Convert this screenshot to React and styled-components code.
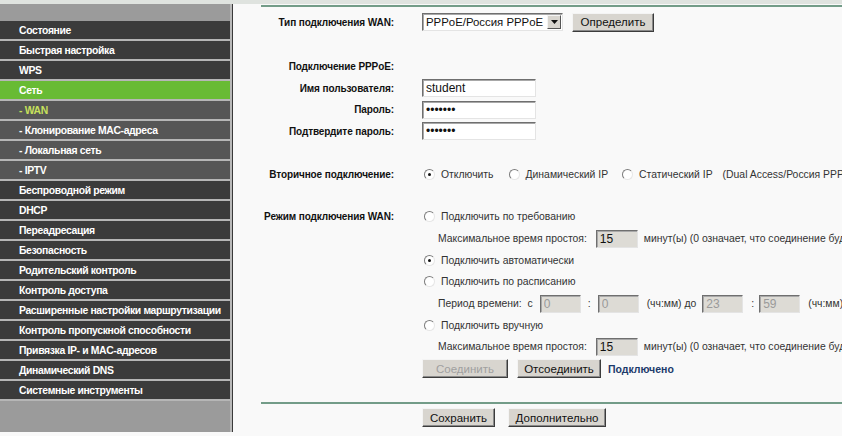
import React from 'react';
import styled, { createGlobalStyle } from 'styled-components';

const GlobalStyle = createGlobalStyle`
   html, body {
      margin: 0;
      padding: 0;
      background: #f9f9f9;
      width: 842px;
      height: 436px;
      overflow: hidden;
   }
   body {
      font-family: "Liberation Sans", Arial, sans-serif;
      font-size: 10.4px;
      color: #222;
   }
`;

const Page = styled.div`
   display: flex;
   flex-direction: column;
   width: 842px;
   height: 436px;
`;

const TopStrip = styled.div`
   height: 4px;
   background: #dfe3df;
   flex-shrink: 0;
`;

const Body = styled.div`
   display: flex;
   flex: 1;
   min-height: 0;
`;

const Sidebar = styled.nav`
   width: 232px;
   height: 428px;
   background: #9b9b9b;
   padding-top: 17px;
   box-sizing: border-box;
   border-right: 2px solid #b9b9b9;
   box-shadow: 1px 0 0 #3a3a3a;
   flex-shrink: 0;
`;

const MenuItem = styled.div`
   height: 18px;
   border-bottom: 2px solid #b6b6b6;
   padding-left: 19px;
   display: flex;
   align-items: center;
   font-family: "Liberation Sans", Arial, sans-serif;
   font-weight: bold;
   font-size: 10.4px;
   letter-spacing: -0.35px;
   white-space: nowrap;
   overflow: hidden;
   color: ${({ $kind }) => ($kind === 'subActive' ? '#c6e05c' : '#fff')};
   background: ${({ $kind }) =>
      $kind === 'active' ? '#68bb34' : $kind === 'sub' || $kind === 'subActive' ? '#565656' : '#3b3b3b'};
`;

const Content = styled.main`
   flex: 1;
   padding-left: 29px;
   padding-top: 1px;
   white-space: nowrap;
   overflow: hidden;
`;

const Line = styled.div`
   height: 2px;
   background: #739c88;
   margin-top: ${({ $mt }) => $mt || 0}px;
`;

const Row = styled.div`
   display: flex;
   align-items: center;
   height: ${({ $h }) => $h || 22}px;
   margin-top: ${({ $mt }) => $mt || 0}px;
`;

const Label = styled.div`
   width: 133px;
   margin-right: 28px;
   text-align: right;
   font-weight: bold;
   font-size: 10px;
   letter-spacing: -0.1px;
   color: #111;
   flex-shrink: 0;
`;

const Field = styled.div`
   display: flex;
   align-items: center;
   padding-left: ${({ $indent }) => $indent || 0}px;
`;

const Text = styled.span`
   color: #333;
   margin-left: ${({ $ml }) => $ml || 0}px;
   margin-right: ${({ $mr }) => $mr || 0}px;
`;

const Status = styled.span`
   font-weight: bold;
   font-size: 10.5px;
   color: #1c3a6b;
   margin-left: 7px;
`;

const TextInput = styled.input`
   box-sizing: border-box;
   width: ${({ $w }) => $w || 114}px;
   height: 18px;
   padding: 0 3px;
   margin: 0 ${({ $mr }) => $mr || 0}px 0 ${({ $ml }) => $ml || 0}px;
   font-family: "Liberation Sans", Arial, sans-serif;
   font-size: 12px;
   color: ${({ $muted }) => ($muted ? '#9a9a9a' : '#111')};
   background: ${({ $grey }) => ($grey ? '#dddbd5' : '#fff')};
   border: 1px solid;
   border-color: #6f6f6f #e4e4e4 #e4e4e4 #6f6f6f;
   box-shadow: inset 1px 1px 0 #a8a8a8;
   outline: none;
`;

const Button = styled.button`
   box-sizing: border-box;
   height: 19px;
   width: ${({ $w }) => $w}px;
   padding: 0;
   margin-left: ${({ $ml }) => $ml || 0}px;
   font-family: "Liberation Sans", Arial, sans-serif;
   font-size: 11.5px;
   color: ${({ disabled }) => (disabled ? '#a0a0a0' : '#111')};
   background: #d8d5cf;
   border: 1px solid;
   border-color: #f4f4f4 #3c3c3c #3c3c3c #f4f4f4;
   box-shadow: inset -1px -1px 0 #8a8a8a;
`;

const SelectBox = styled.div`
   box-sizing: border-box;
   width: 141px;
   height: 18px;
   display: flex;
   align-items: center;
   justify-content: space-between;
   background: #fff;
   border: 1px solid;
   border-color: #6f6f6f #e4e4e4 #e4e4e4 #6f6f6f;
   box-shadow: inset 1px 1px 0 #a8a8a8;
   padding-left: 3px;
   font-size: 11.4px;
   color: #111;
`;

const SelectArrow = styled.span`
   width: 14px;
   height: 14px;
   margin-right: 1px;
   display: flex;
   align-items: center;
   justify-content: center;
   background: #d8d5cf;
   border: 1px solid;
   border-color: #f4f4f4 #555 #555 #f4f4f4;
   box-sizing: border-box;
`;

const RadioWrap = styled.span`
   display: inline-flex;
   align-items: center;
   margin-left: ${({ $ml }) => $ml || 0}px;
   color: #333;
`;

const RadioCircle = styled.span`
   box-sizing: border-box;
   width: 11px;
   height: 11px;
   border-radius: 50%;
   border: 1px solid;
   border-color: #7c7c7c #e6e6e6 #e6e6e6 #7c7c7c;
   background: #fff;
   margin: 0 6px 0 2px;
   display: inline-flex;
   align-items: center;
   justify-content: center;
   flex-shrink: 0;

   &::after {
      content: '';
      width: 3px;
      height: 3px;
      border-radius: 50%;
      background: ${({ $checked }) => ($checked ? '#111' : 'transparent')};
   }
`;

const Radio = ({ checked, label, ml }) => (
   <RadioWrap $ml={ml}>
      <RadioCircle $checked={checked} />
      {label}
   </RadioWrap>
);

const menu = [
   ['Состояние', 'main'],
   ['Быстрая настройка', 'main'],
   ['WPS', 'main'],
   ['Сеть', 'active'],
   ['- WAN', 'subActive'],
   ['- Клонирование MAC-адреса', 'sub'],
   ['- Локальная сеть', 'sub'],
   ['- IPTV', 'sub'],
   ['Беспроводной режим', 'main'],
   ['DHCP', 'main'],
   ['Переадресация', 'main'],
   ['Безопасность', 'main'],
   ['Родительский контроль', 'main'],
   ['Контроль доступа', 'main'],
   ['Расширенные настройки маршрутизации', 'main'],
   ['Контроль пропускной способности', 'main'],
   ['Привязка IP- и MAC-адресов', 'main'],
   ['Динамический DNS', 'main'],
   ['Системные инструменты', 'main'],
];

const idleNote = 'минут(ы) (0 означает, что соединение будет активно всегда)';
const hidden = '•••••••';

const App = () => (
   <Page>
      <GlobalStyle />
      <TopStrip />
      <Body>
         <Sidebar>
            {menu.map(([title, kind]) => (
               <MenuItem key={title} $kind={kind}>{title}</MenuItem>
            ))}
         </Sidebar>
         <Content>
            <Line />
            <Row $mt={4}>
               <Label>Тип подключения WAN:</Label>
               <Field>
                  <SelectBox>
                     PPPoE/Россия PPPoE
                     <SelectArrow>
                        <svg width="7" height="4" viewBox="0 0 7 4"><path d="M0 0h7L3.5 4z" fill="#111" /></svg>
                     </SelectArrow>
                  </SelectBox>
                  <Button $w={82} $ml={9}>Определить</Button>
               </Field>
            </Row>

            <Row $mt={22}>
               <Label>Подключение PPPoE:</Label>
            </Row>
            <Row>
               <Label>Имя пользователя:</Label>
               <Field><TextInput readOnly value="student" /></Field>
            </Row>
            <Row $h={21}>
               <Label>Пароль:</Label>
               <Field><TextInput readOnly value={hidden} /></Field>
            </Row>
            <Row>
               <Label>Подтвердите пароль:</Label>
               <Field><TextInput readOnly value={hidden} /></Field>
            </Row>

            <Row $mt={21}>
               <Label>Вторичное подключение:</Label>
               <Field>
                  <Radio checked label="Отключить" />
                  <Radio ml={13} label="Динамический IP" />
                  <Radio ml={12} label="Статический IP" />
                  <Text $ml={10}>(Dual Access/Россия PPPoE)</Text>
               </Field>
            </Row>

            <Row $mt={21} $h={21.7}>
               <Label>Режим подключения WAN:</Label>
               <Field><Radio label="Подключить по требованию" /></Field>
            </Row>
            <Row $h={21.7}>
               <Label />
               <Field $indent={16}>
                  <Text>Максимальное время простоя:</Text>
                  <TextInput $grey $w={42} $ml={9} readOnly value="15" />
                  <Text $ml={6}>{idleNote}</Text>
               </Field>
            </Row>
            <Row $h={21.7}>
               <Label />
               <Field><Radio checked label="Подключить автоматически" /></Field>
            </Row>
            <Row $h={21.7}>
               <Label />
               <Field><Radio label="Подключить по расписанию" /></Field>
            </Row>
            <Row $h={21.7}>
               <Label />
               <Field $indent={16}>
                  <Text>Период времени:&nbsp; с</Text>
                  <TextInput $grey $muted $w={41} $ml={7} readOnly value="0" />
                  <Text $ml={7} $mr={7}>:</Text>
                  <TextInput $grey $muted $w={41} readOnly value="0" />
                  <Text $ml={8}>(чч:мм) до</Text>
                  <TextInput $grey $muted $w={41} $ml={6} readOnly value="23" />
                  <Text $ml={8} $mr={5}>:</Text>
                  <TextInput $grey $muted $w={41} readOnly value="59" />
                  <Text $ml={8}>(чч:мм)</Text>
               </Field>
            </Row>
            <Row $h={21.7}>
               <Label />
               <Field><Radio label="Подключить вручную" /></Field>
            </Row>
            <Row $h={21.7}>
               <Label />
               <Field $indent={16}>
                  <Text>Максимальное время простоя:</Text>
                  <TextInput $grey $w={42} $ml={9} readOnly value="15" />
                  <Text $ml={6}>{idleNote}</Text>
               </Field>
            </Row>
            <Row $h={21.7}>
               <Label />
               <Field>
                  <Button $w={86} disabled>Соединить</Button>
                  <Button $w={84} $ml={9}>Отсоединить</Button>
                  <Status>Подключено</Status>
               </Field>
            </Row>

            <Line $mt={22} />
            <Row $mt={3}>
               <Label />
               <Field>
                  <Button $w={73}>Сохранить</Button>
                  <Button $w={98} $ml={13}>Дополнительно</Button>
               </Field>
            </Row>
         </Content>
      </Body>
   </Page>
);

export default App;
